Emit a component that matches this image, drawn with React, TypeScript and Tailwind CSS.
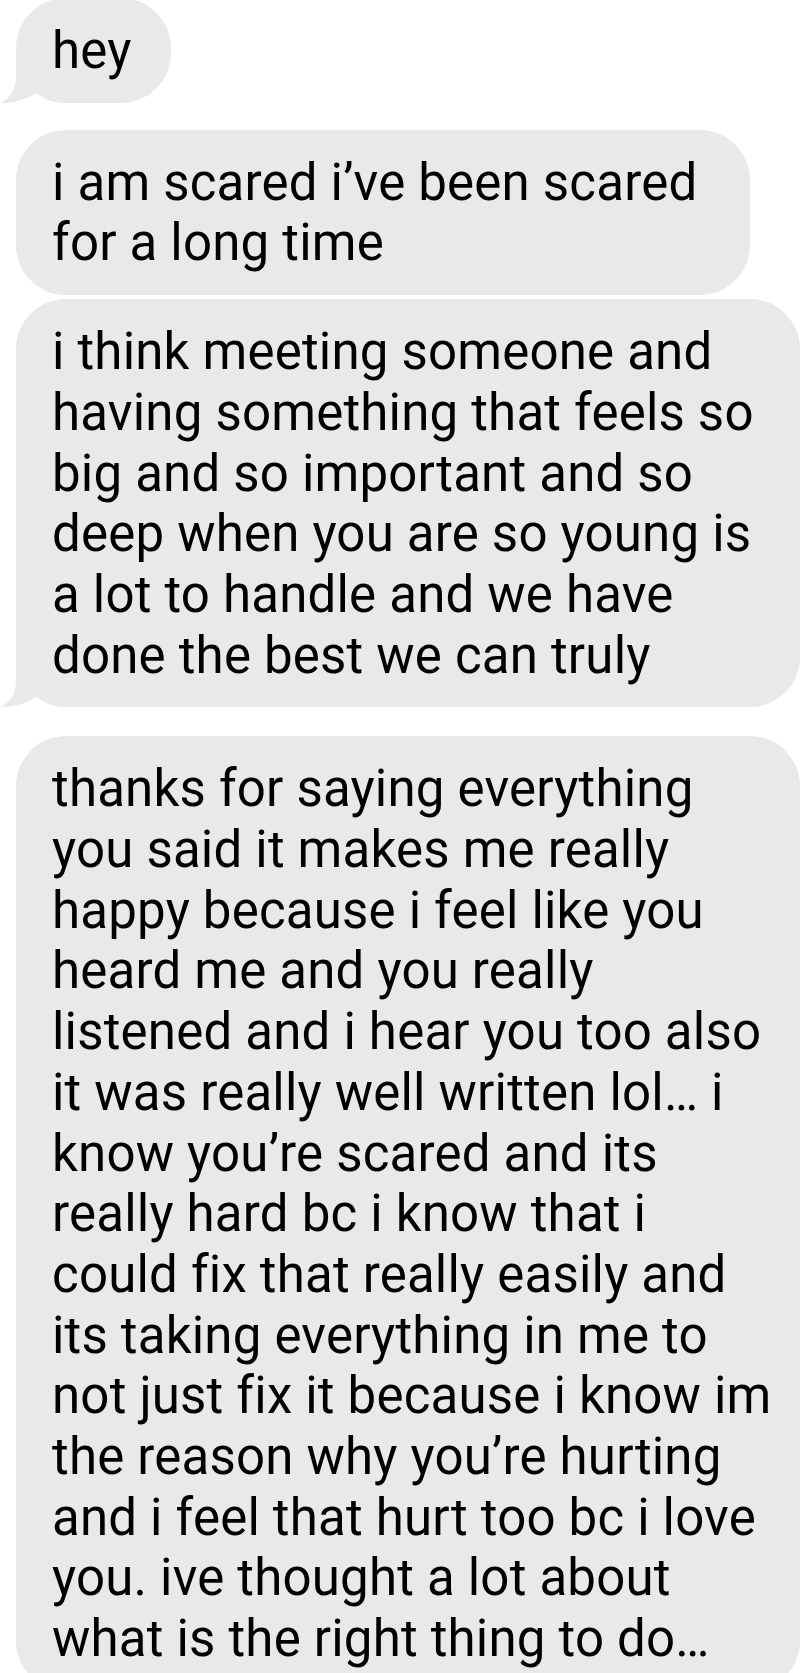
import React from "react";

type BubbleProps = {
  lines: string[];
  widthClass: string;
  extraClass?: string;
  tail?: boolean;
};

function Tail() {
  return (
    <svg
      className="absolute left-[-16px] bottom-0 w-[70px] h-[45px]"
      viewBox="0 0 70 45"
      aria-hidden="true"
    >
      <path
        d="M16 0 L16 19 C16 33 8 42 0 45 C12 45.5 26 41.5 36.5 35.2 L50 0 Z"
        fill="#e9e9eb"
      />
    </svg>
  );
}

function Bubble({ lines, widthClass, extraClass, tail }: BubbleProps) {
  return (
    <div
      className={`relative ml-[16px] shrink-0 rounded-[50px] bg-[#e9e9eb] pl-[36px] pt-[23px] pb-[21px] ${widthClass} ${extraClass ?? ""}`}
    >
      {tail ? <Tail /> : null}
      <div className="relative">
        {lines.map((l, i) => (
          <div key={i} className="whitespace-nowrap">
            {l}
          </div>
        ))}
      </div>
    </div>
  );
}

export default function App() {
  return (
    <div className="h-[1673px] w-[803px] overflow-hidden bg-white font-['Roboto',sans-serif] text-[51px] leading-[60.7px] tracking-[0.2px] text-black">
      <div className="flex flex-col">
        <Bubble
          lines={["hey"]}
          widthClass="w-[155px]"
          extraClass="-mt-[2px]"
          tail
        />
        <div className="h-[27px]" />
        <Bubble
          lines={["i am scared i\u2019ve been scared", "for a long time"]}
          widthClass="w-[734px]"
        />
        <div className="h-[4px]" />
        <Bubble
          lines={[
            "i think meeting someone and",
            "having something that feels so",
            "big and so important and so",
            "deep when you are so young is",
            "a lot to handle and we have",
            "done the best we can truly",
          ]}
          widthClass="w-[784px]"
          tail
        />
        <div className="h-[29px]" />
        <Bubble
          lines={[
            "thanks for saying everything",
            "you said it makes me really",
            "happy because i feel like you",
            "heard me and you really",
            "listened and i hear you too also",
            "it was really well written lol\u2026 i",
            "know you\u2019re scared and its",
            "really hard bc i know that i",
            "could fix that really easily and",
            "its taking everything in me to",
            "not just fix it because i know im",
            "the reason why you\u2019re hurting",
            "and i feel that hurt too bc i love",
            "you. ive thought a lot about",
            "what is the right thing to do\u2026",
          ]}
          widthClass="w-[784px]"
        />
      </div>
    </div>
  );
}
